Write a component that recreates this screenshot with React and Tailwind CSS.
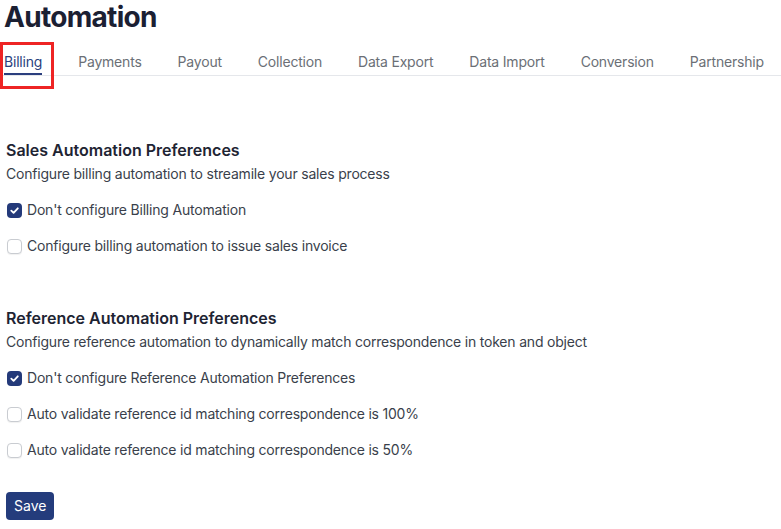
import React from "react";

const tabs = ["Billing","Payments","Payout","Collection","Data Export","Data Import","Conversion","Partnership"];

function Check({ checked, label }) {
  return (
    <label className="flex items-center h-5 gap-[5px] pl-[7px]">
      {checked ? (
        <span className="w-[15px] h-[15px] rounded-[4px] bg-[#243a7a] flex items-center justify-center">
          <svg width="11" height="11" viewBox="0 0 12 12" fill="none">
            <path d="M2.5 6.2 L5 8.6 L9.6 3.6" stroke="white" strokeWidth="2" strokeLinecap="round" strokeLinejoin="round" />
          </svg>
        </span>
      ) : (
        <span className="w-[15px] h-[15px] rounded-[4px] border border-[#c9ccd1] bg-white shadow-[0_1px_1px_rgba(0,0,0,0.06)]"></span>
      )}
      <span className="text-[14px] leading-5 tracking-[-0.2px] text-[#3a3f4b]">{label}</span>
    </label>
  );
}

export default function App() {
  return (
    <div className="relative w-[781px] h-[529px] bg-white overflow-hidden" style={{ fontFamily: "Inter, 'Noto Sans', sans-serif" }}>
      <h1 className="pl-[4px] text-[28px] leading-[34px] font-bold text-[#1b2033] tracking-[-0.7px]">Automation</h1>
      <div className="mt-2 flex gap-[36px] pl-[4px] border-b border-[#e5e7eb]">
        {tabs.map((t, i) => (
          <div key={t} className={"pt-[10px] pb-[1px] border-b-2 text-[14px] leading-5 tracking-[-0.2px] " + (i === 0 ? "border-[#2b3f7e] text-[#2b3f7e]" : "border-transparent text-[#6b6f76]")}>
            {t}
          </div>
        ))}
      </div>
      <div className="absolute left-0 top-[42px] w-[54px] h-[47px] border-[3px] border-[#ee2424]"></div>

      <div className="pl-[6px] mt-[62px]">
        <h2 className="text-[16px] leading-6 font-semibold text-[#1e2433]">Sales Automation Preferences</h2>
        <p className="mt-[2px] text-[14px] leading-5 tracking-[-0.2px] text-[#3a3f4b]">Configure billing automation to streamile your sales process</p>
      </div>
      <div className="mt-4 flex flex-col gap-[16px]">
        <Check checked label="Don't configure Billing Automation" />
        <Check label="Configure billing automation to issue sales invoice" />
      </div>

      <div className="pl-[6px] mt-[50px]">
        <h2 className="text-[16px] leading-6 font-semibold text-[#1e2433]">Reference Automation Preferences</h2>
        <p className="mt-[2px] text-[14px] leading-5 tracking-[-0.2px] text-[#3a3f4b]">Configure reference automation to dynamically match correspondence in token and object</p>
      </div>
      <div className="mt-4 flex flex-col gap-[16px]">
        <Check checked label="Don't configure Reference Automation Preferences" />
        <Check label="Auto validate reference id matching correspondence is 100%" />
        <Check label="Auto validate reference id matching correspondence is 50%" />
      </div>

      <div className="pl-[6px] mt-[32px]">
        <button className="h-[28px] px-[8px] rounded-[4px] bg-[#243c7c] text-white text-[14px] leading-5">Save</button>
      </div>
    </div>
  );
}
